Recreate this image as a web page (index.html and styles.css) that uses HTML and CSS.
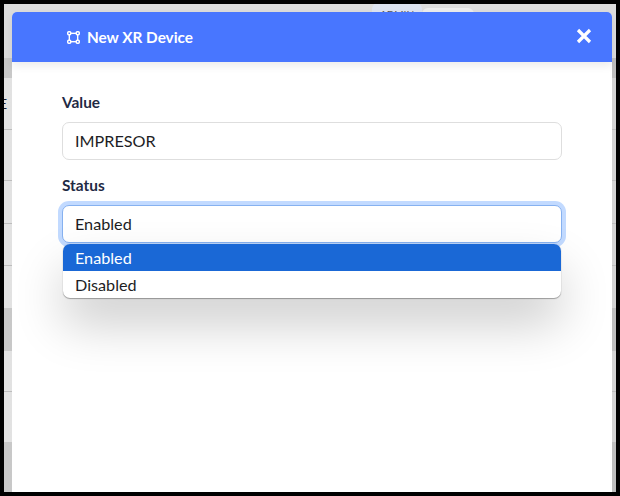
FILE: index.html
```html
<!DOCTYPE html>
<html lang="en">
<head>
<meta charset="utf-8">
<title>New XR Device</title>
<link rel="stylesheet" href="styles.css">
</head>
<body>
<div class="screen">
  <div class="backdrop">
    <div class="topbar">
      <span class="tab tab-admin">ADMIN</span>
      <span class="tab tab-plain"></span>
    </div>
    <div class="band band-dark h20"></div>
    <div class="row h52"><span class="row-letter">E</span></div>
    <div class="row h51"></div>
    <div class="row h43"></div>
    <div class="row h42"></div>
    <div class="row-plain h42"></div>
    <div class="band band-dark h43"></div>
    <div class="row h41"></div>
    <div class="row-plain h50"></div>
    <div class="band band-dark grow"></div>
  </div>

  <div class="modal">
    <header class="modal-header">
      <div class="modal-title">
        <svg class="title-icon" viewBox="0 0 14 14" width="13" height="13" aria-hidden="true">
          <rect x="2.5" y="2.5" width="9" height="9" fill="none" stroke="#fff" stroke-width="1.5"/>
          <rect x="0.8" y="0.8" width="3.2" height="3.2" rx="1" fill="#4876ff" stroke="#fff" stroke-width="1.6"/>
          <rect x="10" y="0.8" width="3.2" height="3.2" rx="1" fill="#4876ff" stroke="#fff" stroke-width="1.6"/>
          <rect x="0.8" y="10" width="3.2" height="3.2" rx="1" fill="#4876ff" stroke="#fff" stroke-width="1.6"/>
          <rect x="10" y="10" width="3.2" height="3.2" rx="1" fill="#4876ff" stroke="#fff" stroke-width="1.6"/>
        </svg>
        <span>New XR Device</span>
      </div>
      <svg class="close-icon" viewBox="0 0 16 16" width="16" height="16" aria-hidden="true">
        <path d="M2 2 L14 14 M14 2 L2 14" stroke="#fff" stroke-width="3.2" fill="none"/>
      </svg>
    </header>
    <div class="modal-body">
      <div class="field field-value">
        <div class="label">Value</div>
        <div class="input">IMPRESOR</div>
      </div>
      <div class="field field-status">
        <div class="label">Status</div>
        <div class="select-wrap">
          <div class="input input-focus">Enabled</div>
          <ul class="options">
            <li class="option option-on">Enabled</li>
            <li class="option">Disabled</li>
          </ul>
        </div>
      </div>
    </div>
  </div>
</div>
</body>
</html>
```

FILE: styles.css
```css
* { box-sizing: border-box; }
html, body { margin: 0; padding: 0; }
body { width: 620px; height: 496px; overflow: hidden; background: #000; font-family: Lato, "Noto Sans", sans-serif; }
.screen { position: relative; width: 620px; height: 496px; border: 4px solid #000; overflow: hidden; }
.backdrop { display: flex; flex-direction: column; height: 100%; background: #dcdcdc; }
.topbar { height: 54px; flex: none; display: flex; align-items: flex-start; padding-left: 368px; background: #dcdcdc; }
.tab { display: block; border-radius: 6px 6px 0 0; font-size: 10px; line-height: 16px; text-align: center; color: #555; overflow: hidden; }
.tab-admin { width: 50px; background: #dde3f0; margin-top: -1px; height: 12px; padding-top: 3px; }
.tab-plain { width: 52px; background: #ececec; margin-top: 4px; height: 8px; }
.band-dark { background: linear-gradient(to right, #c8c8c8, #bebebe); flex: none; }
.band-dark.grow { flex: 1; }
.row { flex: none; border-bottom: 1px solid #bdbdbd; background: linear-gradient(to right, #e2e2e2, #d2d2d2); position: relative; }
.row-plain { flex: none; background: linear-gradient(to right, #e2e2e2, #d2d2d2); }
.row-letter { position: absolute; left: -5px; top: 17px; font-size: 14px; line-height: 17px; color: #1a1a2e; }
.h20 { height: 20px; }
.h41 { height: 41px; }
.h42 { height: 42px; }
.h43 { height: 43px; }
.h50 { height: 50px; }
.h51 { height: 51px; }
.h52 { height: 52px; }
.modal { position: absolute; left: 8px; top: 8px; width: 600px; height: 480px; background: #fff; border-radius: 5px 5px 0 0; display: flex; flex-direction: column; }
.modal-header { height: 50px; flex: none; background: #4876ff; border-radius: 5px 5px 0 0; display: flex; align-items: center; justify-content: space-between; padding: 0 20px 0 55px; box-shadow: 0 4px 8px rgba(0,0,0,0.08); color: #fff; }
.modal-title { display: flex; align-items: center; gap: 7px; font-size: 15.3px; font-weight: 700; line-height: 18px; }
.title-icon { flex: none; }
.close-icon { flex: none; margin-bottom: 2px; }
.modal-body { padding: 0 50px; }
.field-value { padding-top: 31px; }
.field-status { padding-top: 16px; }
.label { font-size: 15.4px; font-weight: 700; line-height: 18px; color: #1f2a44; margin-bottom: 11px; }
.input { height: 38px; padding: 0 12px; border: 1px solid #dedede; border-radius: 7px; background: #fff; font-size: 16.2px; line-height: 36px; color: #1d1d24; }
.input-focus { border-color: #86b1f0; box-shadow: 0 0 0 4px #c2daff; }
.select-wrap { position: relative; }
.select-wrap::after { content: ""; position: absolute; left: 1px; right: 1px; top: 39px; height: 54px; border-radius: 7px; box-shadow: 0 26px 50px rgba(0,0,0,0.2); }
.options { position: absolute; z-index: 1; left: 1px; right: 1px; top: 39px; margin: 0; padding: 0; list-style: none; background: #fff; border-radius: 7px; overflow: hidden; box-shadow: 0 1px 1px rgba(0,0,0,0.3), 0 0 1px rgba(0,0,0,0.25); }
.option { height: 27px; padding: 0 12px; font-size: 16.2px; line-height: 27px; color: #1d1d24; }
.option-on { background: #1a68d6; color: #fff; }
```
